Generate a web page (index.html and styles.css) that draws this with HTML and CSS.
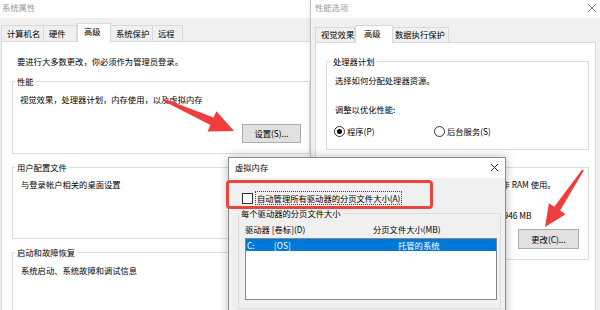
FILE: index.html
```html
<!DOCTYPE html>
<html lang="zh-CN">
<head>
<meta charset="utf-8">
<title>虚拟内存</title>
<link rel="stylesheet" href="styles.css">
</head>
<body>
<div class="desk">

  <section class="win sys">
    <div class="titlebar"><span class="title">系统属性</span></div>
    <div class="body">
      <div class="tabs">
        <div class="tab w43">计算机名</div>
        <div class="tab w33">硬件</div>
        <div class="tab sel w34">高级</div>
        <div class="tab w42">系统保护</div>
        <div class="tab w30">远程</div>
      </div>
      <div class="page">
        <p class="intro">要进行大多数更改，你必须作为管理员登录。</p>
        <fieldset class="group g-perf">
          <legend>性能</legend>
          <p class="gtext">视觉效果，处理器计划，内存使用，以及虚拟内存</p>
          <div class="btnrow"><button class="btn b-set">设置(S)...</button></div>
        </fieldset>
        <fieldset class="group g-user">
          <legend>用户配置文件</legend>
          <p class="gtext">与登录帐户相关的桌面设置</p>
        </fieldset>
        <fieldset class="group g-boot">
          <legend>启动和故障恢复</legend>
          <p class="gtext">系统启动、系统故障和调试信息</p>
        </fieldset>
      </div>
    </div>
  </section>

  <section class="win perf">
    <div class="titlebar">
      <span class="title">性能选项</span>
      <svg class="close" width="10" height="10" viewBox="0 0 10 10"><path d="M1 1L9 9M9 1L1 9" stroke="#8a8a8a" stroke-width="1"/></svg>
    </div>
    <div class="body">
      <div class="tabs">
        <div class="tab w40">视觉效果</div>
        <div class="tab sel w38">高级</div>
        <div class="tab w56">数据执行保护</div>
      </div>
      <div class="page">
        <fieldset class="group g-cpu">
          <legend>处理器计划</legend>
          <p class="t1">选择如何分配处理器资源。</p>
          <p class="t2">调整以优化性能:</p>
          <div class="radios">
            <div class="radio-item first"><span class="radio on"></span><span>程序(P)</span></div>
            <div class="radio-item"><span class="radio"></span><span>后台服务(S)</span></div>
          </div>
        </fieldset>
        <fieldset class="group g-vm">
          <legend>虚拟内存</legend>
          <p class="t1">分页文件是硬盘上的一块区域，Windows 当作 RAM 使用。</p>
          <div class="totalrow"><span class="tlabel">所有驱动器总分页文件大小:</span><span>1946 MB</span></div>
          <div class="btnrow"><button class="btn b-chg">更改(C)...</button></div>
        </fieldset>
      </div>
    </div>
  </section>

  <section class="win vm">
    <div class="titlebar">
      <span class="title">虚拟内存</span>
      <svg class="close" width="9" height="9" viewBox="0 0 9 9"><path d="M1 1L8 8M8 1L1 8" stroke="#222" stroke-width="1"/></svg>
    </div>
    <div class="body">
      <div class="checkrow"><span class="checkbox"></span><span class="focus">自动管理所有驱动器的分页文件大小(A)</span></div>
      <fieldset class="group g-drv">
        <legend>每个驱动器的分页文件大小</legend>
        <div class="lhead"><span>驱动器 [卷标](D)</span><span>分页文件大小(MB)</span></div>
        <div class="listbox">
          <div class="lrow selrow"><span>C:</span><span>[OS]</span><span>托管的系统</span></div>
        </div>
      </fieldset>
    </div>
  </section>

  <div class="highlight"></div>

  <svg class="arrows" width="600" height="310" viewBox="0 0 600 310">
    <polygon fill="#ef3d3d" points="163.4,98.6 213.6,117.6 216.4,111.2 234,131 207.6,131.4 210.4,125 162.6,100.4"/>
    <polygon fill="#ef3d3d" points="582.2,169.4 554.3,206.8 548.9,203.2 545,227 565.5,214.3 560.1,210.6 583.8,170.6"/>
  </svg>
</div>
</body>
</html>
```

FILE: styles.css
```css
* { box-sizing: border-box; margin: 0; padding: 0; }
html, body { width: 600px; height: 310px; overflow: hidden; background: #fff; }
body {
  font-family: "Noto Sans CJK SC", "Noto Sans", sans-serif;
  font-size: 8.3px;
  line-height: 12px;
  color: #000;
}
.desk { position: relative; width: 600px; height: 310px; overflow: hidden; }

/* windows */
.win { position: absolute; top: 0; background: #f0f0f0; }
.titlebar { background: #fff; display: flex; justify-content: space-between; align-items: flex-start; }
.title { line-height: 14px; color: #9a9a9a; white-space: nowrap; }

.sys { left: 0; width: 322px; height: 330px; }
.sys .titlebar { height: 18px; }
.sys .title { padding-left: 2px; }
.sys .body { padding: 5px 1px 0; }

.perf { left: 310px; width: 292px; height: 330px; border-left: 1px solid #c4c4c4; box-shadow: -2px 0 4px rgba(0,0,0,0.06); }
.perf .titlebar { height: 18px; }
.perf .title { padding-left: 4px; }
.perf .close { margin: 3px 5px 0 0; }
.perf .body { padding: 7px 6px 0 4px; }

/* tabs */
.tabs { display: flex; align-items: flex-end; }
.sys .tabs { height: 18px; }
.perf .tabs { height: 17px; }
.tab {
  border: 1px solid #d9d9d9;
  border-bottom: none;
  background: #f0f0f0;
  line-height: 14px;
  padding: 0 0 0 5px;
  white-space: nowrap;
  flex: none;
}
.tab + .tab { border-left: none; }
.sys .tab { height: 16px; }
.perf .tab { height: 15px; line-height: 13px; }
.tab.sel { background: #fff; position: relative; z-index: 1; margin-bottom: -1px; border-left: 1px solid #d9d9d9; }
.sys .tab.sel { height: 19px; line-height: 15px; padding-left: 6px; }
.perf .tab.sel { height: 18px; line-height: 14px; padding-left: 8px; }
.w43 { width: 43px; } .w33 { width: 33px; } .w34 { width: 34px; }
.w42 { width: 42px; } .w30 { width: 30px; } .w40 { width: 40px; }
.w38 { width: 38px; } .w56 { width: 56px; }
.perf .w40 { padding-left: 5px; }
.perf .w56 { padding-left: 2px; }

.page { background: #fff; border: 1px solid #d9d9d9; height: 400px; }
.sys .page { padding: 13px 10px 0; }
.perf .page { padding: 12px 6px 0 10px; }

.intro { padding-left: 5px; }

/* group boxes */
fieldset.group { border: 1px solid #dcdcdc; min-width: 0; }
fieldset.group legend { padding: 0 2px; line-height: 12px; white-space: nowrap; }

.g-perf { margin-top: 8px; padding: 0 8px 10px 7px; }
.g-perf legend, .g-user legend, .g-boot legend { margin-left: -5px; }
.g-perf .gtext { margin-top: 6px; }
.g-user { margin-top: 7px; padding: 0 8px 48px 8px; }
.g-user .gtext { margin-top: 5px; }
.g-boot { margin-top: 7px; padding: 0 8px 40px 8px; }
.g-boot .gtext { margin-top: 6px; }
.g-user legend, .g-boot legend { margin-left: -6px; }

.btnrow { display: flex; justify-content: flex-end; }
.btn {
  font: inherit;
  color: #000;
  background: #e1e1e1;
  border: 1px solid #adadad;
  padding: 0;
  text-align: center;
}
.b-set { width: 59px; height: 19px; line-height: 17px; margin-top: 19px; }
.b-chg { width: 61px; height: 20px; line-height: 18px; margin-top: 8px; }

.g-cpu { padding: 0 6px 12px 8px; }
.g-cpu legend, .g-vm legend { margin-left: -4px; }
.g-cpu .t1 { margin-top: 7px; }
.g-cpu .t2 { margin-top: 17px; }
.radios { display: flex; margin-top: 10px; height: 12px; align-items: center; }
.radio-item { display: flex; align-items: center; gap: 2px; white-space: nowrap; }
.radio-item.first { width: 100px; margin-left: -1px; }
.radio {
  width: 11px; height: 11px; border: 1px solid #333; border-radius: 50%;
  display: flex; align-items: center; justify-content: center; background: #fff;
}
.radio.on::after { content: ""; width: 5px; height: 5px; border-radius: 50%; background: #000; }

.g-vm { margin-top: 11px; padding: 0 9px 10px 8px; }
.g-vm .t1 { margin-top: 5px; white-space: nowrap; padding-left: 5px; }
.totalrow { display: flex; margin-top: 19px; white-space: nowrap; }
.tlabel { width: 164px; flex: none; }

/* virtual memory dialog */
.vm {
  left: 228px; top: 157px; width: 278px; height: 170px;
  border: 1px solid #8c8c8c;
  box-shadow: 0 0 9px rgba(0,0,0,0.28);
  z-index: 2;
}
.vm .titlebar { height: 20px; padding-top: 3px; }
.vm .title { color: #000; padding-left: 6px; line-height: 12px; }
.vm .close { margin: 2px 6px 0 0; }
.vm .body { padding: 13px 4px 0 9px; }
.checkrow { display: flex; align-items: center; height: 14px; padding-left: 4px; white-space: nowrap; }
.checkbox { width: 11px; height: 11px; border: 1px solid #333; background: #fff; flex: none; }
.focus { margin-left: 2px; border: 1px dotted #444; padding: 0 1px; line-height: 12px; }

.g-drv { margin-top: 2px; padding: 0 3px 8px 6px; }
.g-drv legend { margin-left: -6px; }
.lhead { display: grid; grid-template-columns: 128px 1fr; margin-top: 4px; white-space: nowrap; }
.listbox { width: 252px; height: 62px; margin-top: 3px; border: 1px solid #828790; background: #fff; }
.lrow { display: grid; grid-template-columns: 27px 124px 1fr; height: 12px; line-height: 12px; padding-left: 1px; white-space: nowrap; }
.selrow { background: #0078d7; color: #fff; }

/* annotations */
.highlight {
  position: absolute; left: 226px; top: 180px; width: 207px; height: 29px;
  border: 3px solid #e8453c; border-radius: 4px; z-index: 3;
}
.arrows { position: absolute; left: 0; top: 0; z-index: 4; pointer-events: none; }
```
